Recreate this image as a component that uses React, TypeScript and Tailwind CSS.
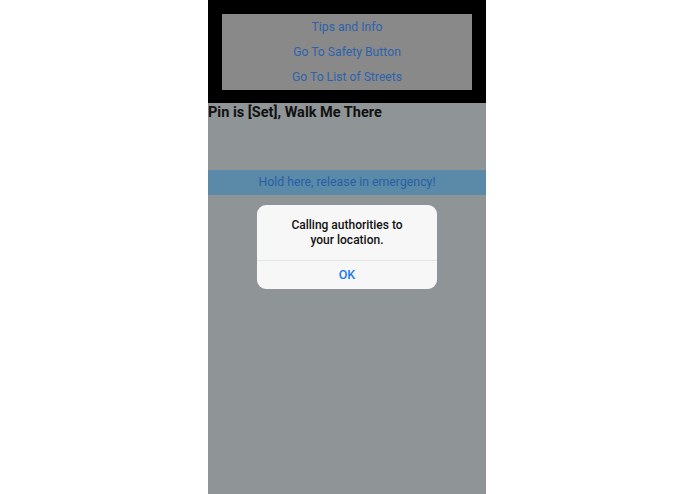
import React from "react";

const font = { fontFamily: "Roboto, 'Liberation Sans', sans-serif" };

export default function App() {
  return (
    <div className="w-full h-[494px] bg-white pl-[208px]" style={font}>
      <div className="w-[278px] h-full flex flex-col bg-[#8f9497]">
        <div className="h-[103px] bg-black pt-[14px] px-[14px] shrink-0">
          <div className="h-[76px] bg-[#898989] flex flex-col pt-[1px]">
            {["Tips and Info", "Go To Safety Button", "Go To List of Streets"].map((t) => (
              <div key={t} className="h-[25px] flex items-center justify-center text-[12.2px] text-[#2d63ad]">
                {t}
              </div>
            ))}
          </div>
        </div>
        <div className="relative flex-1">
          <div className="h-[18px] flex items-center text-[14.5px] font-bold text-[#111] leading-none mt-[1px]">
            Pin is [Set], Walk Me There
          </div>
          <div className="mt-[48px] h-[25px] bg-[#5a8aa8] flex items-center justify-center text-[12.3px] text-[#2a5ea4]">
            Hold here, release in emergency!
          </div>
          <div className="absolute left-[49px] top-[102px] w-[180px] h-[84px] bg-[#f7f7f7] rounded-[9px] flex flex-col overflow-hidden">
            <div className="h-[55px] flex flex-col items-center justify-center text-[12px] font-medium text-[#111] leading-[15px] pt-[1px]">
              <span>Calling authorities to</span>
              <span>your location.</span>
            </div>
            <div className="h-px bg-[#e4e4e4]" />
            <div className="flex-1 flex items-center justify-center text-[12.5px] font-medium text-[#1a7bea]">
              OK
            </div>
          </div>
        </div>
      </div>
    </div>
  );
}
